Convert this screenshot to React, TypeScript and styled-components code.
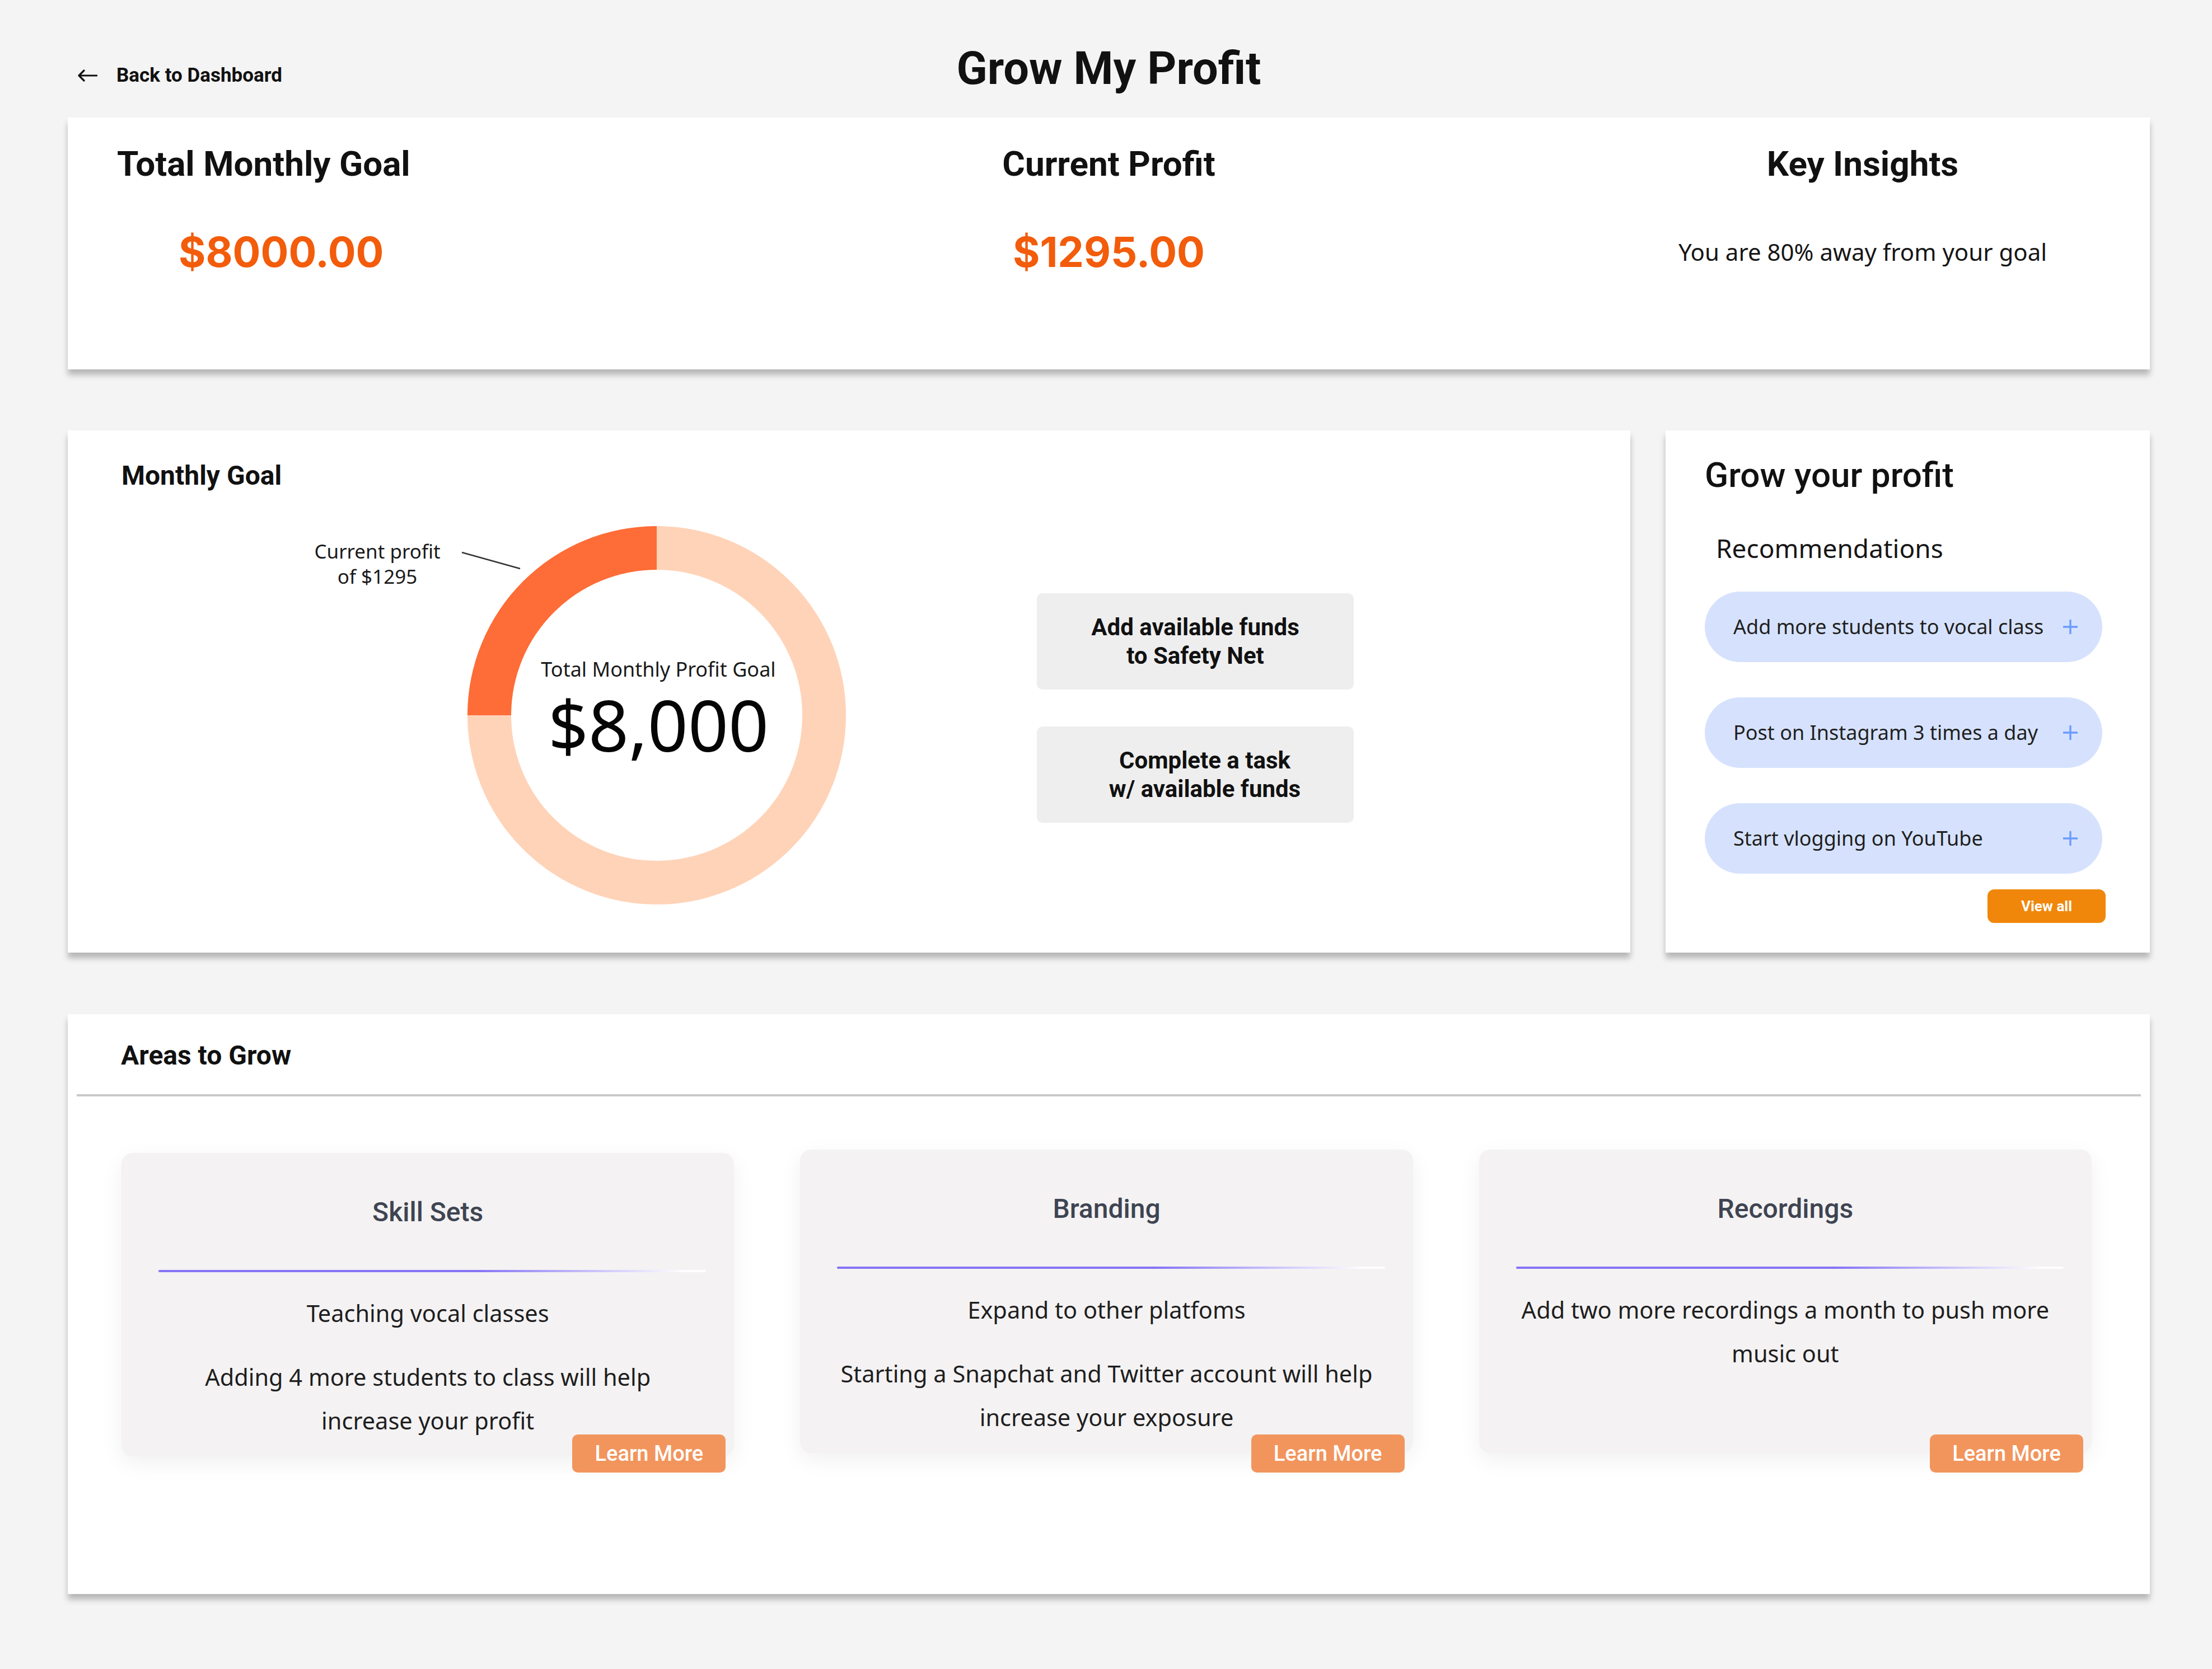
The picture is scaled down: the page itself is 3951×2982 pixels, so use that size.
import React from "react";
import styled, { createGlobalStyle } from "styled-components";

const GlobalStyle = createGlobalStyle`
  html, body { margin: 0; padding: 0; background: #f4f4f4; }
  body { font-family: Roboto, "Liberation Sans", sans-serif; color: #000; }
  * { box-sizing: border-box; }
`;

const Page = styled.div`
  width: 3951px;
  min-height: 2982px;
  padding: 78px 111px 0 121px;
`;

const Header = styled.header`
  display: grid;
  grid-template-columns: 1fr auto 1fr;
  align-items: center;
  height: 84px;
  margin-bottom: 48px;
`;

const BackLink = styled.a`
  display: flex;
  align-items: center;
  gap: 34px;
  padding-left: 17px;
  margin-top: 28px;
  font: 700 35px/1 Roboto, sans-serif;
  color: #111;
  text-decoration: none;
`;

const PageTitle = styled.h1`
  margin: 4px 0 0;
  font: 700 81px/1 Roboto, sans-serif;
  color: #111;
`;

const TopCard = styled.section`
  background: #fff;
  height: 450px;
  box-shadow: 0 10px 10px rgba(0, 0, 0, 0.25);
  display: grid;
  grid-template-columns: 1fr auto 1fr;
  padding-top: 52px;
`;

const StatCol = styled.div<{ $align: "start" | "center" | "end" }>`
  display: flex;
  flex-direction: column;
  align-items: ${(p) => (p.$align === "start" ? "flex-start" : "center")};
  padding-left: ${(p) => (p.$align === "start" ? "88px" : "0")};
  justify-self: ${(p) => p.$align};
  width: ${(p) => (p.$align === "end" ? "1026px" : "auto")};
`;

const StatTitle = styled.h2`
  margin: 0;
  font: 700 62px/1 Roboto, sans-serif;
  color: #111;
`;

const StatValue = styled.div<{ $indent?: number }>`
  margin-top: 89px;
  margin-left: ${(p) => p.$indent ?? 0}px;
  font: 700 74px/1 Inter, Roboto, sans-serif;
  color: #f25c0b;
`;

const Insight = styled.p`
  margin: 88px 0 0;
  font: 400 42px/76px "Noto Sans", sans-serif;
  color: #161616;
`;

const Row = styled.div`
  display: flex;
  gap: 63px;
  margin-top: 109px;
`;

const Card = styled.section`
  background: #fff;
  box-shadow: 0 10px 10px rgba(0, 0, 0, 0.25);
`;

const MonthlyCard = styled(Card)`
  flex: 1;
  padding: 57px 96px 86px;
`;

const SectionTitle = styled.h3`
  margin: 0;
  font: 700 48px/1 Roboto, sans-serif;
  color: #111;
`;

const MonthlyBody = styled.div`
  display: flex;
  align-items: center;
  margin-top: 66px;
  padding-left: 618px;
  gap: 341px;
`;

const ChartWrap = styled.div`
  position: relative;
  width: 676px;
  height: 676px;
  display: grid;
  place-items: center;
  & > * {
    grid-area: 1 / 1;
  }
`;

const ChartSvg = styled.svg`
  width: 676px;
  height: 676px;
  overflow: visible;
`;

const ChartCenter = styled.div`
  display: flex;
  flex-direction: column;
  align-items: center;
  margin-bottom: 26px;
  margin-left: 6px;
`;

const ChartCaption = styled.div`
  font: 400 36px/44px "Noto Sans", sans-serif;
  color: #1a1a1a;
`;

const ChartAmount = styled.div`
  margin-top: 13px;
  font: 400 126px/126px "Noto Sans", sans-serif;
  color: #050505;
`;

const Callout = styled.div`
  position: absolute;
  left: -291px;
  top: 22px;
  width: 260px;
  text-align: center;
  font: 400 35px/45px "Noto Sans", sans-serif;
  color: #1a1a1a;
`;

const ActionColumn = styled.div`
  display: flex;
  flex-direction: column;
  gap: 66px;
  margin-bottom: 26px;
`;

const ActionButton = styled.button<{ $shift?: number }>`
  width: 566px;
  height: 172px;
  border: none;
  border-radius: 10px;
  background: #eeeeee;
  padding: 0 0 0 ${(p) => p.$shift ?? 0}px;
  font: 700 42px/51px Roboto, sans-serif;
  color: #111;
  text-align: center;
`;

const GrowCard = styled(Card)`
  width: 865px;
  padding: 49px 85px 0 70px;
  display: flex;
  flex-direction: column;
`;

const GrowTitle = styled.h3`
  margin: 0;
  font: 500 62px/1 Roboto, sans-serif;
  color: #111;
`;

const RecoLabel = styled.div`
  margin: 72px 0 0 20px;
  font: 400 46px/55px "Noto Sans", sans-serif;
  color: #161616;
`;

const PillList = styled.div`
  display: flex;
  flex-direction: column;
  gap: 63px;
  margin-top: 50px;
`;

const Pill = styled.div`
  height: 126px;
  border-radius: 63px;
  background: #d6e2fd;
  display: flex;
  align-items: center;
  justify-content: space-between;
  padding: 0 43px 0 51px;
  font: 400 36px/1 "Noto Sans", sans-serif;
  color: #1f1f1f;
`;

const ViewAll = styled.button`
  align-self: flex-end;
  margin: 28px -6px 0 0;
  width: 211px;
  height: 60px;
  border: none;
  border-radius: 12px;
  background: #f0870a;
  color: #fff;
  font: 700 26px/1 Roboto, sans-serif;
`;

const AreasCard = styled(Card)`
  margin-top: 110px;
  padding-top: 50px;
  padding-bottom: 246px;
`;

const AreasTitle = styled(SectionTitle)`
  padding-left: 95px;
`;

const Divider = styled.hr`
  margin: 45px 16px 0;
  border: none;
  height: 4px;
  background: #c9c9c9;
`;

const AreaGrid = styled.div`
  display: grid;
  grid-template-columns: repeat(3, 1fr);
  gap: 118px;
  padding: 0 104px 0 96px;
  margin-top: 95px;
`;

const AreaCard = styled.article<{ $drop?: number }>`
  position: relative;
  height: 542px;
  margin-top: ${(p) => p.$drop ?? 0}px;
  border-radius: 20px;
  background: #f4f2f3;
  box-shadow: 0 12px 40px rgba(0, 0, 0, 0.06);
  padding-top: 82px;
  display: flex;
  flex-direction: column;
`;

const AreaTitle = styled.h4`
  margin: 0;
  text-align: center;
  font: 500 48px/1 Roboto, sans-serif;
  color: #3e4451;
`;

const GradientLine = styled.div`
  margin: 79px 50px 0 66px;
  height: 4px;
  border-radius: 2px;
  background: linear-gradient(90deg, #8473f5 0%, #8473f5 58%, rgba(255, 255, 255, 0.95) 96%);
`;

const AreaText = styled.div`
  margin-top: 34px;
  padding: 0 10px;
  text-align: center;
  font: 400 41.5px/78px "Noto Sans", sans-serif;
  color: #1e1e1e;
`;

const AreaPara = styled.p`
  margin: 0;
  & + & {
    margin-top: 36px;
  }
`;

const LearnMore = styled.button<{ $lift?: number }>`
  position: absolute;
  right: 15px;
  bottom: ${(p) => -35 + (p.$lift ?? 0)}px;
  width: 274px;
  height: 68px;
  border: none;
  border-radius: 10px;
  background: #f2955d;
  color: #fff;
  font: 500 38px/1 Roboto, sans-serif;
`;

const ArrowIcon = () => (
  <svg width="36" height="22" viewBox="0 0 36 22" fill="none">
    <path d="M35 11H3M12 2L3 11l9 9" stroke="#111" strokeWidth="3.2" strokeLinecap="round" strokeLinejoin="round" />
  </svg>
);

const PlusIcon = () => (
  <svg width="28" height="28" viewBox="0 0 28 28" fill="none">
    <path d="M14 1v26M1 14h26" stroke="#6b9bff" strokeWidth="3.4" />
  </svg>
);

const Donut = () => (
  <ChartSvg viewBox="0 0 676 676">
    <circle cx="338" cy="338" r="299" fill="none" stroke="#ffd3b8" strokeWidth="78" />
    <path d="M338 0 A338 338 0 0 0 0 338 L78 338 A260 260 0 0 1 338 78 Z" fill="#fe6c37" />
    <line x1="-10" y1="47" x2="94" y2="76" stroke="#333" strokeWidth="2.4" />
  </ChartSvg>
);

const recommendations = [
  "Add more students to vocal class",
  "Post on Instagram 3 times a day",
  "Start vlogging on YouTube",
];

const areas: { title: string; paras: string[][]; drop?: number }[] = [
  {
    title: "Skill Sets",
    paras: [["Teaching vocal classes"], ["Adding 4 more students to class will help", "increase your profit"]],
    drop: 6,
  },
  {
    title: "Branding",
    paras: [["Expand to other platfoms"], ["Starting a Snapchat and Twitter account will help", "increase your exposure"]],
  },
  {
    title: "Recordings",
    paras: [["Add two more recordings a month to push more", "music out"]],
  },
];

export default function App() {
  return (
    <>
      <GlobalStyle />
      <Page>
        <Header>
          <BackLink href="#">
            <ArrowIcon />
            Back to Dashboard
          </BackLink>
          <PageTitle>Grow My Profit</PageTitle>
          <span />
        </Header>

        <TopCard>
          <StatCol $align="start">
            <StatTitle>Total Monthly Goal</StatTitle>
            <StatValue $indent={110}>$8000.00</StatValue>
          </StatCol>
          <StatCol $align="center">
            <StatTitle>Current Profit</StatTitle>
            <StatValue>$1295.00</StatValue>
          </StatCol>
          <StatCol $align="end">
            <StatTitle>Key Insights</StatTitle>
            <Insight>You are 80% away from your goal</Insight>
          </StatCol>
        </TopCard>

        <Row>
          <MonthlyCard>
            <SectionTitle>Monthly Goal</SectionTitle>
            <MonthlyBody>
              <ChartWrap>
                <Donut />
                <ChartCenter>
                  <ChartCaption>Total Monthly Profit Goal</ChartCaption>
                  <ChartAmount>$8,000</ChartAmount>
                </ChartCenter>
                <Callout>
                  Current profit
                  <br />
                  of $1295
                </Callout>
              </ChartWrap>
              <ActionColumn>
                <ActionButton>
                  Add available funds
                  <br />
                  to Safety Net
                </ActionButton>
                <ActionButton $shift={34}>
                  Complete a task
                  <br />
                  w/ available funds
                </ActionButton>
              </ActionColumn>
            </MonthlyBody>
          </MonthlyCard>

          <GrowCard>
            <GrowTitle>Grow your profit</GrowTitle>
            <RecoLabel>Recommendations</RecoLabel>
            <PillList>
              {recommendations.map((r) => (
                <Pill key={r}>
                  <span>{r}</span>
                  <PlusIcon />
                </Pill>
              ))}
            </PillList>
            <ViewAll>View all</ViewAll>
          </GrowCard>
        </Row>

        <AreasCard>
          <AreasTitle>Areas to Grow</AreasTitle>
          <Divider />
          <AreaGrid>
            {areas.map((a) => (
              <AreaCard key={a.title} $drop={a.drop}>
                <AreaTitle>{a.title}</AreaTitle>
                <GradientLine />
                <AreaText>
                  {a.paras.map((lines, i) => (
                    <AreaPara key={i}>
                      {lines.map((l, j) => (
                        <React.Fragment key={j}>
                          {j > 0 && <br />}
                          {l}
                        </React.Fragment>
                      ))}
                    </AreaPara>
                  ))}
                </AreaText>
                <LearnMore $lift={a.drop}>Learn More</LearnMore>
              </AreaCard>
            ))}
          </AreaGrid>
        </AreasCard>
      </Page>
    </>
  );
}
